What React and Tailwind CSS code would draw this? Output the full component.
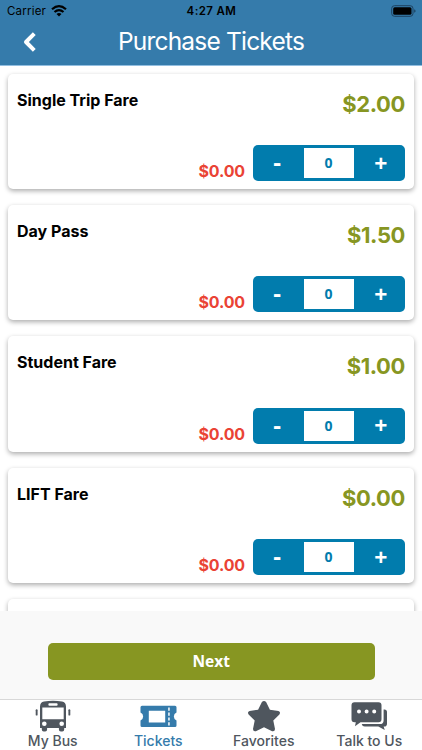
import { useState } from "react";

const fares = [
    { id: 1, name: "Single Trip Fare", price: 2 },
    { id: 2, name: "Day Pass", price: 1.5 },
    { id: 3, name: "Student Fare", price: 1 },
    { id: 4, name: "LIFT Fare", price: 0 },
    { id: 5, name: "", price: null },
];

const BusIcon = () => (
    <svg width="36" height="32" viewBox="0 0 36 32" fill="currentColor">
        <path
            fillRule="evenodd"
            d="M9 1.500Q18-.2 27 1.500 30.800 2.200 31 6.500V28h-1.800v1.500q0 1.900-1.900 1.900h-1.500q-1.900 0-1.900-1.900V28H12.100v1.500q0 1.900-1.900 1.900H8.700q-1.900 0-1.900-1.900V28H5V6.500Q5.200 2.200 9 1.500ZM14.300 3.200q-.9 0-.9 1v.5q0 1 .9 1h7.400q.9 0 .9-1v-.5q0-1-.9-1ZM7.300 7.600v11.600h21.400V7.600ZM9.300 21.400a2.300 2.300 0 1 0 0 4.600 2.300 2.300 0 1 0 0-4.600ZM26.700 21.400a2.300 2.300 0 1 0 0 4.600 2.300 2.300 0 1 0 0-4.600Z"
        />
        <rect x="0.700" y="9.300" width="1.900" height="6.300" rx="0.900" />
        <rect x="33.400" y="9.300" width="1.900" height="6.300" rx="0.900" />
    </svg>
);

const TicketIcon = () => (
    <svg width="37" height="32" viewBox="0 0 37 32" fill="currentColor">
        <path
            fillRule="evenodd"
            d="M2 5.800h33q1.500 0 1.500 1.500v5.300a4.200 4.200 0 0 0 0 7.800v5.100q0 1.500-1.500 1.500H2Q.5 27 .5 25.500v-5.100a4.200 4.200 0 0 0 0-7.800V7.300Q.5 5.800 2 5.800ZM8.800 10.800v11.600h16.400V10.800ZM28.200 7.600v3.200h1.500V7.600ZM28.200 12.500v3.200h1.500v-3.200ZM28.200 17.400v3.200h1.500v-3.200ZM28.200 22.300v3.200h1.500v-3.200Z"
        />
    </svg>
);

const StarIcon = () => (
    <svg width="34" height="32" viewBox="0 0 34 32" fill="currentColor">
        <path d="M14.900 2.100Q17-.1 19.100 2.100L22.900 9.800 31.400 10.900Q34 12 32.400 14.500L26.300 20.400 28 29Q27.900 31.900 25.100 31.200L17 27.300 8.900 31.200Q6.100 31.900 6 29L7.700 20.400 1.600 14.500Q0 12 2.600 10.900L11.100 9.800Z" />
    </svg>
);

const ChatIcon = () => (
    <svg width="37" height="32" viewBox="0 0 37 32" fill="currentColor">
        <path
            fillRule="evenodd"
            d="M3.500 2.200h24q3 0 3 3v14q0 3-3 3H9.500L4 26.300l.8-4.100H3.500q-3 0-3-3v-14q0-3 3-3ZM8 9.500a2 2 0 1 0 0 4 2 2 0 1 0 0-4ZM15.600 9.500a2 2 0 1 0 0 4 2 2 0 1 0 0-4ZM23.200 9.500a2 2 0 1 0 0 4 2 2 0 1 0 0-4Z"
        />
        <path d="M32.600 9.400h.8q2.600 0 2.600 2.600v11.800q0 2.800-2.800 2.800h-.6l1.200 3.500-6.500-3.500H13.700q-2.400 0-3-2.500h18q3.900 0 3.900-3.700Z" />
    </svg>
);

const tabs = [
    { label: "My Bus", Icon: BusIcon },
    { label: "Tickets", Icon: TicketIcon },
    { label: "Favorites", Icon: StarIcon },
    { label: "Talk to Us", Icon: ChatIcon },
];

const StatusBar = () => (
    <div className="grid grid-cols-3 items-center h-[22px] pl-[7px] pr-[6px] text-black">
        <div className="flex items-center gap-[5px] pt-px text-[11.500px] tracking-[0.2px]">
            Carrier
            <svg className="-mt-px" width="16" height="12" viewBox="0 0 16 12" fill="none" stroke="currentColor" strokeWidth="2.200">
                <path d="M1 4.300Q8-1.900 15 4.300" />
                <path d="M3.500 7Q8 3.100 12.500 7" />
                <path d="M8 11.400 5.500 8.900Q8 6.900 10.500 8.900Z" fill="currentColor" stroke="none" />
            </svg>
        </div>
        <div className="pt-px text-center text-[11.500px] font-semibold tracking-[0.4px]">4:27 AM</div>
        <svg className="justify-self-end" width="25" height="12" viewBox="0 0 25 12">
            <rect x="0.700" y="0.700" width="21.300" height="10.600" rx="2.800" fill="none" stroke="#1d4260" />
            <rect x="2.200" y="2.200" width="18.300" height="7.600" rx="1.500" />
            <path d="M23.200 4.200q1.400.5 1.400 1.800t-1.400 1.800Z" fill="#1d4260" />
        </svg>
    </div>
);

const FareCard = ({ fare }) => {
    const [count, setCount] = useState(0);

    return (
        <div className="h-[115.400px] shrink-0 rounded-[5px] bg-white px-[9px] pt-4 shadow-[0_2px_5px_rgba(0,0,0,0.33)]">
            {fare.price !== null && (
                <>
                    <div className="flex h-[55.500px] justify-between">
                        <h2 className="text-[16px] leading-[20px] font-bold text-black">{fare.name}</h2>
                        <span className="text-[22px] leading-[28px] font-bold tracking-[-0.4px] text-[#879622]">
                            ${fare.price.toFixed(2)}
                        </span>
                    </div>
                    <div className="flex justify-end">
                        <span className="mr-[7.500px] pt-4 text-[16px] leading-[20px] font-bold tracking-[-0.15px] text-[#ea4335]">
                            ${(fare.price * count).toFixed(2)}
                        </span>
                        <div className="flex h-[36px] w-[152.500px] items-center rounded-[5px] bg-[#017cad] font-['Open_Sans',sans-serif] font-bold">
                            <button
                                className="w-[51px] pb-[3px] pr-0.5 text-center text-[24px] leading-[31px] text-white"
                                onClick={() => setCount(Math.max(0, count - 1))}
                            >
                                -
                            </button>
                            <span className="h-[30px] w-[50px] bg-white text-center text-[14px] leading-[29px] text-[#017cad]">
                                {count}
                            </span>
                            <button
                                className="flex-1 pl-[3px] text-center text-[23px] leading-[31px] text-white"
                                onClick={() => setCount(count + 1)}
                            >
                                +
                            </button>
                        </div>
                    </div>
                </>
            )}
        </div>
    );
};

export default function App() {
    const [activeTab, setActiveTab] = useState("Tickets");

    return (
        <div className="flex h-[750px] w-[422px] flex-col overflow-hidden bg-white font-[Inter,sans-serif]">
            <header className="h-[66px] shrink-0 border-b border-[#92bee0] bg-[#357bab]">
                <StatusBar />
                <div className="grid h-[38px] grid-cols-[60px_1fr_60px] items-center">
                    <button className="pl-[22px]">
                        <svg width="16" height="22" viewBox="0 0 16 22" fill="none" stroke="white" strokeWidth="4">
                            <path d="M12.300 3.600 4 12l8.300 8.400" strokeLinejoin="round" />
                        </svg>
                    </button>
                    <h1 className="text-center text-[24.500px] leading-[36px] tracking-[-0.8px] text-white">Purchase Tickets</h1>
                </div>
            </header>

            <main className="flex h-[545px] shrink-0 flex-col gap-4 overflow-hidden px-2 pt-[7.500px]">
                {fares.map((fare) => (
                    <FareCard key={fare.id} fare={fare} />
                ))}
            </main>

            <div className="h-[88px] shrink-0 bg-[#f9f9f9] px-12 pt-[31.500px]">
                <button className="h-[37px] w-[326.500px] rounded-[5px] bg-[#879622] pt-px font-['Open_Sans',sans-serif] text-[15.500px] font-bold text-white">
                    Next
                </button>
            </div>

            <nav className="grid h-[51px] shrink-0 grid-cols-4 border-t border-[#d8d8d8] bg-white">
                {tabs.map(({ label, Icon }) => (
                    <button
                        key={label}
                        className={`flex flex-col items-center text-[14px] leading-[18px] font-medium ${
                            activeTab === label ? "text-[#357bab]" : "text-[#4f565e]"
                        }`}
                        onClick={() => setActiveTab(label)}
                    >
                        <Icon />
                        {label}
                    </button>
                ))}
            </nav>
        </div>
    );
}
